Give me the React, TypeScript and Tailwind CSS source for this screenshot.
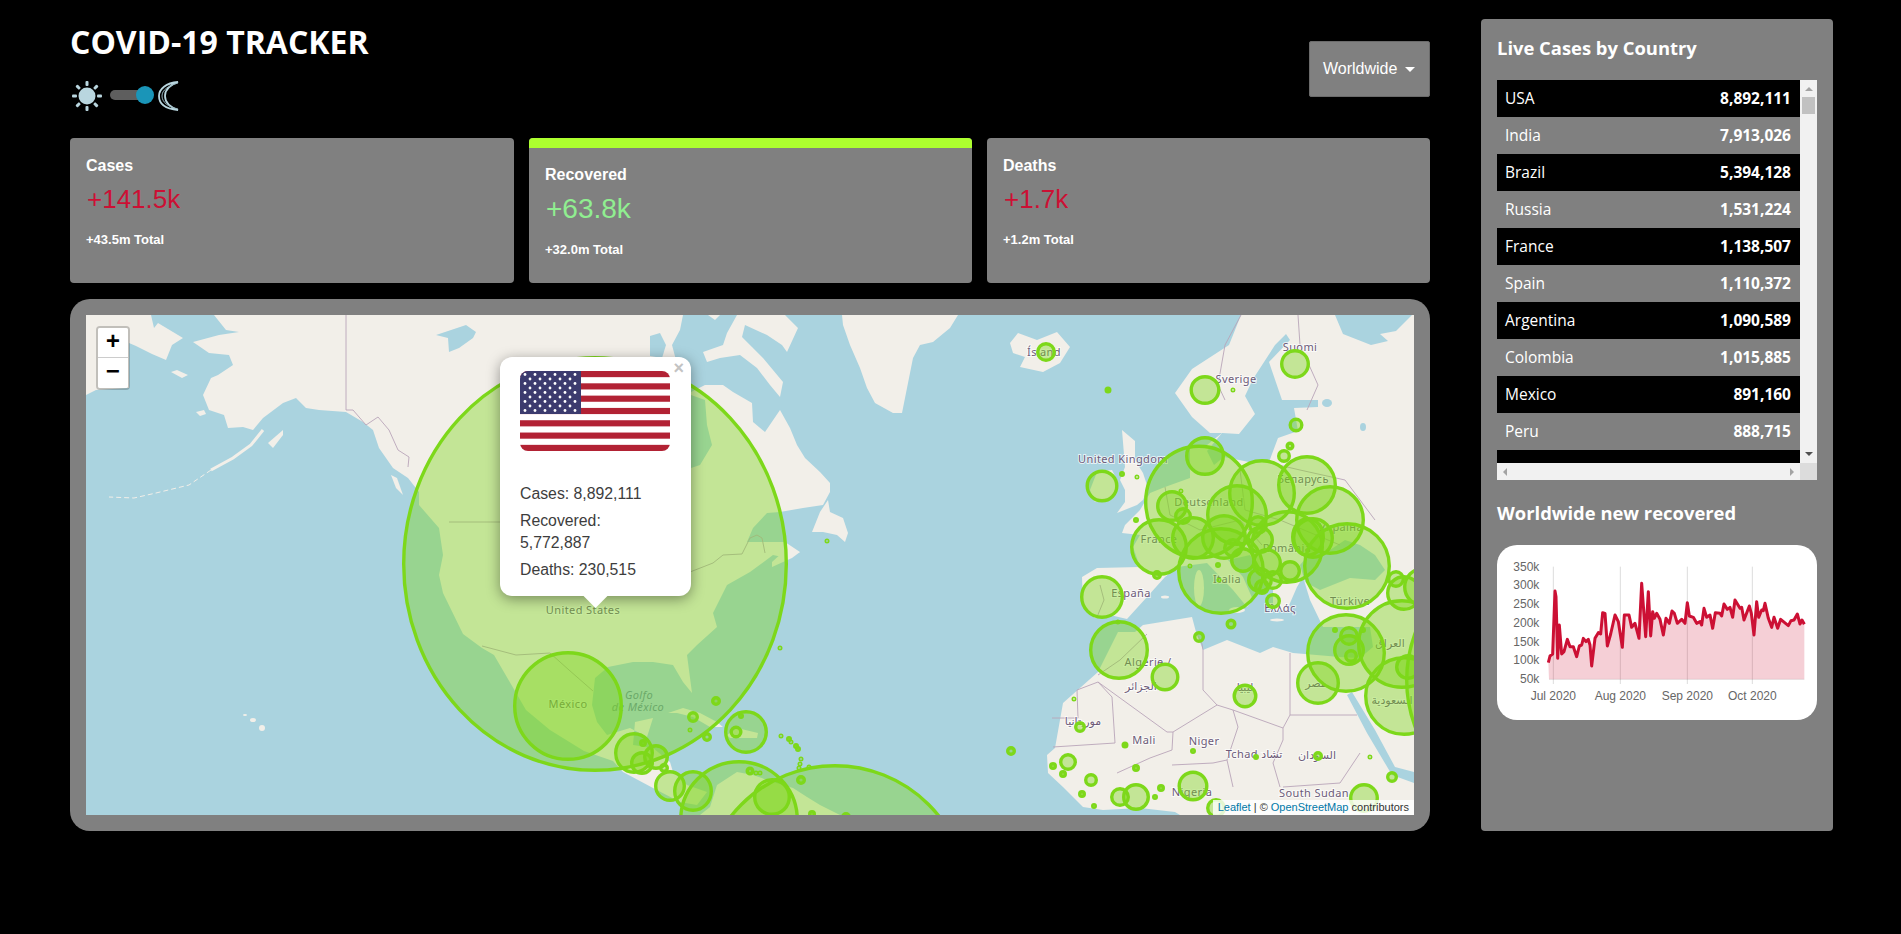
import React from 'react';

const countries = [
  ['USA', '8,892,111'],
  ['India', '7,913,026'],
  ['Brazil', '5,394,128'],
  ['Russia', '1,531,224'],
  ['France', '1,138,507'],
  ['Spain', '1,110,372'],
  ['Argentina', '1,090,589'],
  ['Colombia', '1,015,885'],
  ['Mexico', '891,160'],
  ['Peru', '888,715'],
  ['', ''],
];

// page coordinates, outer edge of the ring: [cx, cy, rx, ry?]
const circles: number[][] = [
  [595, 564, 193, 208], [568, 706, 55, 55], [634, 753, 20, 21], [656, 757, 13], [642, 763, 12], [643, 743, 4], [664, 768, 5],
  [670, 786, 16], [693, 791, 20, 21], [739, 820, 60], [835, 898, 134], [772, 797, 19], [746, 732, 22], [736, 732, 6.5], [716, 701, 5],
  [693, 717, 6], [690, 730, 2], [707, 737, 5], [741, 716, 3], [781, 736, 2], [789, 739, 3], [791, 742, 2], [796, 746, 3], [798, 749, 3],
  [801, 759, 2], [800, 764, 2], [799, 768, 2], [809, 767, 2], [801, 780, 5], [750, 771, 4.5], [756, 773, 2], [760, 773, 2], [812, 814, 4],
  [846, 817, 5], [780, 648, 2], [1011, 751, 5], [827, 541, 2], [1046, 352, 10], [1108, 390, 3.5], [1205, 390, 15.5, 15], [1233, 390, 2],
  [1295, 364, 15], [1296, 425, 7.5], [1290, 446, 4.5], [1284, 456, 7], [1199, 502, 55, 57.5], [1205, 456, 20], [1102, 486, 16.5],
  [1122, 474, 3], [1137, 477, 2], [1172, 506, 16], [1183, 516, 9], [1181, 491, 1.5], [1262, 493, 34], [1237, 515, 31], [1307, 485, 30],
  [1330, 520, 35], [1313, 538, 21], [1308, 537, 17, 20], [1159, 547, 29], [1193, 538, 22], [1221, 571, 44], [1224, 537, 23],
  [1258, 525, 10], [1260, 540, 14], [1233, 548, 10], [1243, 560, 13], [1267, 563, 15], [1260, 580, 13], [1262, 587, 8], [1273, 580, 10],
  [1290, 571, 11], [1273, 601, 8], [1287, 547, 37], [1157, 575, 5], [1190, 566, 2], [1218, 565, 3], [1219, 580, 2], [1136, 520, 3],
  [1231, 624, 5.5], [1199, 637, 6], [1102, 597, 22], [1119, 650, 30], [1118, 622, 2.5], [1347, 566, 44], [1396, 579, 9], [1404, 593, 18],
  [1423, 587, 20], [1346, 653, 40], [1402, 644, 45], [1404, 696, 40], [1349, 650, 16], [1349, 636, 10], [1351, 656, 7], [1335, 630, 3],
  [1363, 630, 3], [1408, 667, 13], [1520, 680, 115, 125], [1318, 683, 22], [1165, 677, 14.5], [1245, 696, 12.5], [1080, 727, 6],
  [1074, 699, 2], [1125, 745, 3.5], [1193, 751, 3], [1256, 757, 3], [1318, 756, 5], [1370, 757, 2], [1392, 777, 6], [1068, 762, 9],
  [1053, 766, 4], [1063, 774, 4], [1082, 794, 4], [1091, 780, 7], [1094, 806, 3], [1120, 797, 10], [1136, 797, 14], [1155, 797, 3],
  [1161, 788, 4], [1136, 768, 4], [1193, 786, 15.5], [1216, 808, 10], [1364, 798, 15],
];

const land = [
  // Chukotka corner
  '86,315 151,315 154,328 158,323 183,338 172,345 166,360 152,354 136,346 129,343 129,388 96,390 86,395',
  // North and Central America
  '214,315 226,330 239,332 219,335 193,342 209,353 229,355 233,365 218,375 211,378 203,395 209,410 224,415 228,428 243,427 253,430 263,418 283,403 296,398 306,408 319,410 346,412 363,422 373,430 379,448 393,468 408,478 419,492 419,505 439,528 443,555 439,575 443,593 463,634 482,648 494,655 526,710 550,730 584,751 613,761 623,772 653,788 680,802 697,805 707,792 687,785 673,772 670,762 653,748 633,745 635,722 653,718 647,737 630,728 607,735 597,722 592,705 595,678 608,667 633,662 653,662 673,665 683,682 692,693 687,655 697,645 717,627 713,613 727,585 750,572 773,555 787,558 800,552 785,542 767,542 747,542 753,528 767,513 780,512 803,508 823,505 830,492 830,483 820,472 805,458 797,445 790,428 780,410 765,432 753,422 752,403 733,392 723,385 705,385 691,392 680,375 672,345 680,330 683,315',
  // Baffin
  '703,352 723,345 727,333 737,315 785,315 798,328 787,352 782,345 767,335 745,325 742,337 752,347 763,358 783,382 780,397 770,385 757,368 740,355 720,358 707,362',
  '708,315 720,315 715,320',
  // Greenland, Newfoundland, Nova Scotia, Iceland
  '842,315 958,315 950,328 933,342 920,345 913,358 907,388 902,413 893,413 875,403 867,388 860,368 850,345 843,325',
  '828,500 820,512 812,532 823,532 837,535 845,542 848,533 843,518 830,512',
  '772,562 783,552 800,552 792,558 772,567',
  '1010,343 1018,333 1037,340 1057,332 1070,347 1060,363 1043,372 1020,367 1025,357 1013,353',
  // Islands near Alaska
  '283,430 268,443 273,448 283,435', '171,372 177,370 188,375 182,378', '196,412 204,410 206,414 200,416', '391,475 397,478 403,495 396,488',
  // Cuba, Hispaniola
  '668,713 683,708 700,713 717,722 723,727 710,727 693,717 677,713', '727,735 737,728 758,733 757,738 730,738',
  // South America
  '700,815 710,807 717,785 737,772 753,775 773,782 793,788 807,797 820,805 840,815',
  // Eurasia and Africa
  '1241,315 1229,345 1192,369 1175,393 1192,417 1210,433 1222,433 1207,445 1190,447 1190,478 1165,487 1150,493 1140,510 1125,525 1122,533 1140,535 1133,547 1140,567 1097,568 1082,577 1083,607 1095,618 1110,615 1127,619 1135,632 1118,632 1098,672 1063,703 1055,748 1047,755 1048,773 1063,787 1083,807 1103,810 1140,808 1175,812 1180,815 1414,815 1414,315',
  // Britain, Ireland
  '1122,430 1135,441 1135,460 1143,473 1148,488 1143,500 1137,505 1117,513 1125,502 1125,490 1120,480 1125,467', '1097,472 1112,470 1118,482 1112,497 1095,502 1090,490',
];

const water = [
  '1335,315 1343,334 1371,345 1388,341 1380,334 1396,331 1412,315',
  '1222,433 1239,434 1255,414 1245,396 1253,379 1275,345 1286,334 1290,340 1269,362 1282,400 1318,400 1318,407 1294,408 1298,431 1278,438 1269,462 1249,462 1224,457 1214,465 1207,451',
  '1127,619 1147,597 1165,577 1177,567 1207,563 1233,590 1247,607 1253,600 1243,577 1228,560 1250,555 1273,590 1273,610 1287,610 1297,587 1303,577 1310,600 1323,627 1370,627 1373,647 1360,658 1340,657 1293,653 1273,647 1260,653 1227,640 1203,650 1196,632 1192,617 1143,625 1135,632 1127,632',
  '1300,565 1310,553 1330,550 1345,540 1360,545 1375,555 1385,570 1375,580 1350,578 1320,590 1305,582',
  '1347,695 1352,692 1375,730 1395,767 1414,772 1414,783 1392,775 1367,733',
  '691,395 705,400 707,425 712,445 700,465 691,468',
  // Great Bear lake and the inlet above the popup
  '436,335 466,325 476,332 473,338 459,348 449,352 448,338',
  '650,336 660,333 666,345 662,358 650,356',
];

const islandDots = [
  [1199, 588, 5, 18], [1237, 610, 8, 3], [1165, 597, 4, 1.5], [1277, 620, 7, 1.5], [253, 720, 3, 2], [262, 728, 3, 3], [245, 715, 2, 1],
  [1327, 403, 5, 4, 1], [1363, 427, 3, 4, 1],
];

const borders = [
  '346,315 346,410 353,410 366,425 378,417 389,430 398,450 409,457 408,467',
  '449,522 500,522', '690,572 713,563 723,555 742,554 750,538 757,535 762,538 765,553',
  '482,646 516,655 550,653 569,670 593,691',
  '1098,682 1167,732 1173,732 1217,705 1233,710 1283,728 1290,715 1357,715',
  '1290,653 1290,715', '1203,650 1203,690 1217,705', '1112,697 1115,743 1053,747', '1112,697 1098,682',
  '1173,732 1172,750 1150,758 1117,773', '1233,710 1238,727 1227,760 1233,787', '1283,728 1283,740 1273,763 1280,787',
  '1172,765 1213,763 1227,760', '1052,718 1078,718 1077,690 1098,682', '1283,787 1340,783 1360,753',
  '1241,315 1225,345 1218,385 1225,400', '1298,315 1300,345 1318,385 1307,410',
  '1165,487 1170,515 1200,530 1240,520 1262,545', '1240,470 1245,510 1280,520 1340,545', '1270,463 1300,470 1345,480 1375,520',
  '1100,585 1104,600 1097,617', '1098,675 1120,660 1147,634', '1196,632 1202,644 1203,650',
];

const labels: [string, number, number][] = [
  ['United States', 583, 614], ['México', 568, 708], ['United Kingdom', 1123, 463], ['Deutschland', 1209, 506], ['France', 1159, 543],
  ['España', 1131, 597], ['Italia', 1227, 583], ['România', 1287, 552], ['Беларусь', 1303, 483], ['Україна', 1341, 531],
  ['Türkiye', 1350, 605], ['Sverige', 1236, 383], ['Suomi', 1300, 351], ['Ísland', 1044, 356], ['Mali', 1144, 744], ['Niger', 1204, 745],
  ['Tchad تشاد', 1254, 758], ['Nigeria', 1192, 796], ['South Sudan', 1314, 797], ['Ελλάς', 1280, 612], ['Algérie /', 1148, 666],
  ['الجزائر', 1141, 690], ['موريتانيا', 1083, 725], ['ليبيا', 1245, 691], ['مصر', 1316, 687], ['السعودية', 1392, 704],
  ['العراق', 1390, 647], ['السودان', 1317, 759],
];

const chartLine =
  '205,398 210,378 218,372 225,183 228,200 233,385 238,285 245,372 252,365 262,328 270,350 280,350 290,380 298,348 305,345 310,325 318,335 325,328 330,345 335,408 345,325 355,308 362,312 368,248 375,250 382,348 392,312 405,255 415,275 427,352 433,255 447,255 455,292 465,280 477,325 485,160 497,320 505,185 512,318 518,245 523,265 530,250 540,268 550,315 558,265 568,280 576,243 583,250 592,280 605,268 615,280 622,218 628,258 640,262 650,280 660,275 665,285 672,235 680,262 690,255 698,295 706,248 720,250 725,258 732,222 742,238 750,232 758,262 765,210 780,235 785,232 792,270 808,228 814,250 822,315 830,215 836,262 845,240 850,242 855,220 865,265 875,292 882,262 893,295 902,268 925,287 933,272 942,270 952,252 960,282 966,270 973,283';

type StatCardProps = { title: string; value: string; total: string; valueClass: string; widthClass: string; active?: boolean };

function StatCard({ title, value, total, valueClass, widthClass, active }: StatCardProps) {
  return (
    <div className={`${widthClass} rounded-[4px] overflow-hidden bg-[#808080] font-['Liberation_Sans',sans-serif] text-white`}>
      {active && <div className="h-[10px] bg-[#adff2f]"></div>}
      <div className={`px-4 ${active ? 'pt-4' : 'pt-[17px]'}`}>
        <h3 className="text-[16px] leading-[22px] font-bold">{title}</h3>
        <p className={`leading-[34px] ml-[1px] ${active ? 'mt-[6px]' : 'mt-[5px]'} ${valueClass}`}>{value}</p>
        <p className="text-[13px] leading-[20px] font-bold mt-[14px]">{total}</p>
      </div>
    </div>
  );
}

function ThemeToggle() {
  return (
    <div className="flex items-center mt-[16px] h-[32px]">
      <svg width="32" height="32" viewBox="0 0 32 32" className="ml-[1px]">
        <circle cx="16" cy="16" r="8.5" fill="#b9d6df" />
        {[0, 45, 90, 135, 180, 225, 270, 315].map((a) => (
          <rect key={a} x="14.5" y="1" width="3" height="5" rx="1" fill="#b9d6df" transform={`rotate(${a} 16 16)`} />
        ))}
      </svg>
      <div className="relative w-[41px] h-[10px] rounded-full bg-[#5e5e5e] ml-[7px] -mt-[2px]">
        <div className="absolute -right-[3px] -top-[4px] w-[18px] h-[18px] rounded-full bg-[#1a95b8]"></div>
      </div>
      <svg width="22" height="30" viewBox="0 0 22 30" className="ml-[7px]">
        <path d="M20 1 C8 2 1 8 1 15 C1 23 8 28 20 29 C12 26 7 21 7 15 C7 9 12 4 20 1 Z" fill="none" stroke="#b9d6df" strokeWidth="1.8" />
        <path d="M20 2 C10 5 4 9 4 15 C4 21 10 26 20 28" fill="none" stroke="#9ab8c1" strokeWidth="1" />
      </svg>
    </div>
  );
}

function UsFlag() {
  const stars: React.ReactNode[] = [];
  for (let r = 0; r < 9; r++) {
    const n = r % 2 === 0 ? 6 : 5;
    for (let c = 0; c < n; c++) {
      stars.push(<circle key={`${r}-${c}`} cx={(r % 2 === 0 ? 5 : 10) + c * 10} cy={3.5 + r * 4.5} r="1.4" fill="#fff" />);
    }
  }
  return (
    <svg width="150" height="80" viewBox="0 0 150 80" className="block rounded-[8px]">
      <rect width="150" height="80" fill="#fff" />
      {[0, 2, 4, 6, 8, 10, 12].map((i) => (
        <rect key={i} y={(i * 80) / 13} width="150" height={80 / 13} fill="#b22234" />
      ))}
      <rect width="61" height="43" fill="#3c3b6e" />
      {stars}
    </svg>
  );
}

function WorldMap() {
  return (
    <svg viewBox="86 315 1328 500" className="absolute inset-0 w-full h-full">
      {land.map((p, i) => <polygon key={i} points={p} fill="#f2efe9" />)}
      {water.map((p, i) => <polygon key={i} points={p} fill="#aad3df" />)}
      {islandDots.map(([x, y, rx, ry, w], i) => <ellipse key={i} cx={x} cy={y} rx={rx} ry={ry} fill={w ? '#aad3df' : '#f2efe9'} />)}
      <polyline points="263,430 251,445 233,458 211,470" fill="none" stroke="#f2efe9" strokeWidth="3" />
      <polyline points="211,470 189,485 156,493 134,498 109,497" fill="none" stroke="#f2efe9" strokeWidth="1" strokeDasharray="5 3" />
      {borders.map((p, i) => <polyline key={i} points={p} fill="none" stroke="#b9a5b9" strokeWidth="0.9" />)}
      <g fontFamily="'Noto Sans','DejaVu Sans',sans-serif" fontSize="11" letterSpacing="0.4" fill="#6d5a78" stroke="#ffffff" strokeOpacity="0.7" strokeWidth="2" paintOrder="stroke" textAnchor="middle">
        {labels.map(([t, x, y]) => <text key={t} x={x} y={y}>{t}</text>)}
        <text x="639" y="699" fontStyle="italic" fill="#5f8aa0" stroke="none">Golfo</text>
        <text x="638" y="711" fontStyle="italic" fill="#5f8aa0" stroke="none">de México</text>
      </g>
      <g fill="#7dd81a" fillOpacity="0.4" stroke="#7dd81a" strokeWidth="3.4">
        {circles.map(([cx, cy, rx, ry], i) => (
          <ellipse key={i} cx={cx} cy={cy} rx={Math.max(rx - 1.7, 0.8)} ry={Math.max((ry ?? rx) - 1.7, 0.8)} />
        ))}
      </g>
    </svg>
  );
}

function ScrollList() {
  return (
    <div className="relative h-[400px] w-[320px] overflow-hidden bg-[#f1f1f1] font-['Open_Sans',sans-serif] text-white text-[15.5px]">
      <div className="w-[303px] h-[383px] overflow-hidden">
        {countries.map(([name, cases], i) => (
          <div key={i} className={`flex justify-between items-center h-[37px] pl-2 pr-[9px] pt-[1px] ${i % 2 === 0 ? 'bg-black' : 'bg-[#808080]'}`}>
            <span>{name}</span>
            <span className="font-bold">{cases}</span>
          </div>
        ))}
      </div>
      {/* scrollbars */}
      <div className="absolute right-[2px] top-[17px] w-[13px] h-[17px] bg-[#c1c1c1]"></div>
      <div className="absolute right-[4px] top-[7px] w-0 h-0 border-x-[4px] border-x-transparent border-b-[4px] border-b-[#a3a3a3]"></div>
      <div className="absolute right-[4px] top-[372px] w-0 h-0 border-x-[4px] border-x-transparent border-t-[4px] border-t-[#505050]"></div>
      <div className="absolute right-0 bottom-0 w-[17px] h-[17px] bg-[#dcdcdc]"></div>
      <div className="absolute left-[6px] bottom-[4px] w-0 h-0 border-y-[4px] border-y-transparent border-r-[4px] border-r-[#a3a3a3]"></div>
      <div className="absolute left-[293px] bottom-[4px] w-0 h-0 border-y-[4px] border-y-transparent border-l-[4px] border-l-[#a3a3a3]"></div>
    </div>
  );
}

function RecoveredChart() {
  const yLabels: [string, number][] = [['350k', 110], ['300k', 165], ['250k', 222], ['200k', 278], ['150k', 335], ['100k', 390], ['50k', 447]];
  const xLabels: [string, number][] = [['Jul 2020', 220], ['Aug 2020', 421], ['Sep 2020', 622], ['Oct 2020', 817]];
  return (
    <div className="w-[320px] h-[175px] rounded-[20px] bg-white mt-[17px]">
      <svg viewBox="51 45 960 525" className="w-full h-full block">
        {xLabels.map(([, x]) => <line key={x} x1={x} x2={x} y1="110" y2="462" stroke="#000" strokeOpacity="0.14" strokeWidth="3" />)}
        <line x1="207" x2="973" y1="448" y2="448" stroke="#000" strokeOpacity="0.1" strokeWidth="3" />
        <polygon points={`207,448 ${chartLine} 973,448`} fill="#cc1034" fillOpacity="0.2" />
        <polyline points={chartLine} fill="none" stroke="#cc1034" strokeWidth="9" strokeLinejoin="round" />
        <g fontFamily="'Liberation Sans',sans-serif" fontSize="36" fill="#666">
          {yLabels.map(([t, y]) => <text key={t} x="178" y={y + 12} textAnchor="end">{t}</text>)}
          {xLabels.map(([t, x]) => <text key={t} x={x} y="509" textAnchor="middle">{t}</text>)}
        </g>
      </svg>
    </div>
  );
}

export default function App() {
  return (
    <div className="min-h-[934px] bg-black flex pl-[70px] pr-[68px] pt-[19px] gap-[51px]">
      <div className="w-[1360px] h-[812px] flex flex-col">
        {/* Header */}
        <div className="h-[119px] flex justify-between items-start">
          <div>
            <h1 className="text-[32px] leading-[44px] font-bold text-white font-['Open_Sans',sans-serif] mt-[1px]">COVID-19 TRACKER</h1>
            <ThemeToggle />
          </div>
          <div className="mt-[22px] w-[121px] h-[56px] flex items-center pl-[13px] bg-[#808080] border border-[#6b6b6b] rounded-[2px] text-white text-[16px] font-['Liberation_Sans',sans-serif]">
            Worldwide
            <span className="ml-[8px] mt-[1px] w-0 h-0 border-x-[5px] border-x-transparent border-t-[5px] border-t-white"></span>
          </div>
        </div>

        {/* Stat cards */}
        <div className="flex gap-[15px] h-[145px]">
          <StatCard title="Cases" value="+141.5k" total="+43.5m Total" valueClass="text-[26px] text-[#cc1034]" widthClass="w-[444px]" />
          <StatCard title="Recovered" value="+63.8k" total="+32.0m Total" valueClass="text-[28px] text-[#90ee90]" widthClass="w-[443px]" active />
          <StatCard title="Deaths" value="+1.7k" total="+1.2m Total" valueClass="text-[26px] text-[#cc1034]" widthClass="w-[443px]" />
        </div>

        {/* Map */}
        <div className="mt-[16px] flex-1 rounded-[20px] bg-[#808080] p-4">
          <div className="relative h-full overflow-hidden bg-[#aad3df] font-['Liberation_Sans',sans-serif]">
            <WorldMap />
            <div className="absolute left-[10px] top-[11px] w-[34px] rounded-[4px] border-2 border-black/20 bg-clip-padding">
              <div className="h-[30px] bg-white rounded-t-[2px] border-b border-[#ccc] flex items-center justify-center text-[24px] font-bold text-black font-['Liberation_Mono',monospace]">+</div>
              <div className="h-[30px] bg-white rounded-b-[2px] flex items-center justify-center text-[24px] font-bold text-black font-['Liberation_Mono',monospace]">−</div>
            </div>
            <div className="absolute left-[414px] top-[42px] w-[191px] h-[239px] rounded-[12px] bg-white shadow-[0_3px_14px_rgba(0,0,0,0.4)] pl-[20px] pt-[14px] text-[#3d3d3d] text-[15.8px] leading-[22px]">
              <UsFlag />
              <p className="mt-[32px]">Cases: 8,892,111</p>
              <p className="mt-[5px]">Recovered:<br />5,772,887</p>
              <p className="mt-[5px]">Deaths: 230,515</p>
              <span className="absolute right-[7px] top-[3px] text-[#c3c3c3] font-bold text-[18px] leading-[16px]">×</span>
              <div className="absolute left-[86px] top-[228px] w-[19px] h-[19px] rotate-45 bg-white"></div>
            </div>
            <div className="absolute right-0 bottom-0 h-[15px] pl-[5px] pr-[5px] bg-white/80 text-[11px] leading-[15px] text-[#333]">
              <span className="text-[#0078a8]">Leaflet</span> | © <span className="text-[#0078a8]">OpenStreetMap</span> contributors
            </div>
          </div>
        </div>
      </div>

      {/* Right panel */}
      <div className="w-[352px] h-[812px] rounded-[4px] bg-[#808080] px-4 pt-[14px] text-white font-['Open_Sans',sans-serif]">
        <h3 className="text-[18.4px] leading-[30px] font-bold mb-[17px]">Live Cases by Country</h3>
        <ScrollList />
        <h3 className="text-[18.4px] leading-[30px] font-bold mt-[18px]">Worldwide new recovered</h3>
        <RecoveredChart />
      </div>
    </div>
  );
}
